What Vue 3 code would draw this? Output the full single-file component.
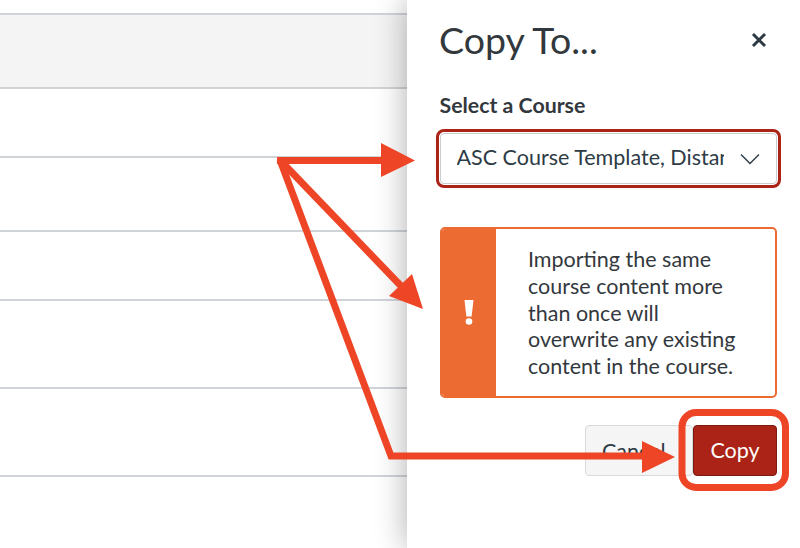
<script setup>
const rows = [
  { h: 15, cls: 'row blank' },
  { h: 74, cls: 'row shade' },
  { h: 69, cls: 'row' },
  { h: 74, cls: 'row' },
  { h: 69, cls: 'row' },
  { h: 88, cls: 'row' },
  { h: 88, cls: 'row' }
]
</script>

<template>
  <div class="page">
    <div class="table">
      <div v-for="(r, i) in rows" :key="i" :class="r.cls" :style="{ height: r.h + 'px' }"></div>
    </div>
    <aside class="panel">
      <header class="head">
        <h1 class="title">Copy To...</h1>
        <svg class="close" width="16" height="16" viewBox="0 0 16 16" aria-label="Close">
          <path d="M2 2 14 14M14 2 2 14" stroke="#2d3b45" stroke-width="3" fill="none" />
        </svg>
      </header>
      <div class="label">Select a Course</div>
      <div class="select-ring">
        <div class="select">
          <span class="select-text">ASC Course Template, Distance Learning</span>
          <svg class="chev" width="20" height="12" viewBox="0 0 20 12">
            <path d="M1 1.5 10 10.5 19 1.5" stroke="#2d3b45" stroke-width="1.4" fill="none" />
          </svg>
        </div>
      </div>
      <div class="alert">
        <div class="alert-icon">
          <svg width="10" height="25" viewBox="0 0 10 25">
            <path d="M0.5 0h9L7.6 16.5H2.4Z" fill="#fff" />
            <circle cx="5" cy="21.5" r="3.3" fill="#fff" />
          </svg>
        </div>
        <p class="alert-text">Importing the same course content more than once will overwrite any existing content in the course.</p>
      </div>
      <div class="actions">
        <button class="btn cancel">Cancel</button>
        <button class="btn copy">Copy</button>
      </div>
    </aside>
    <svg class="arrows" width="800" height="548" viewBox="0 0 800 548">
      <rect x="682" y="412.5" width="103.5" height="75" rx="14" fill="none" stroke="#ee4527" stroke-width="7" />
      <g stroke="#ee4527" stroke-width="7" fill="none" stroke-linejoin="miter">
        <path d="M277 160.5H385" />
        <path d="M280 160 402 287" />
        <path d="M280 160 391 456H648" />
      </g>
      <g fill="#ee4527">
        <path d="M381 143 415 160.5 381 177Z" />
        <path d="M423 309 389 296 412 274Z" />
        <path d="M642 441 675 457 642 473Z" />
      </g>
    </svg>
  </div>
</template>

<style scoped>
.page {
  position: relative;
  display: flex;
  width: 800px;
  height: 548px;
  overflow: hidden;
  background: #fff;
  font-family: Lato, "Open Sans", sans-serif;
  color: #33383d;
}
.table {
  width: 407px;
  flex: none;
}
.row {
  box-sizing: border-box;
  border-bottom: 2px solid #d0d4d8;
}
.shade {
  background: #f4f4f4;
}
.panel {
  position: relative;
  z-index: 1;
  box-sizing: border-box;
  width: 393px;
  padding: 0 23px 0 32.5px;
  background: #fff;
  box-shadow: 0 0 30px rgba(0, 0, 0, 0.32);
}
.head {
  display: flex;
  align-items: flex-start;
  justify-content: space-between;
  height: 84px;
}
.title {
  margin: 0 0 0 -0.5px;
  font-size: 37.5px;
  font-weight: 400;
  line-height: 84px;
  height: 84px;
  transform: translateY(-2px);
}
.close {
  margin: 32px 10px 0 0;
}
.label {
  margin-top: 6px;
  font-size: 21.3px;
  font-weight: 700;
  line-height: 30px;
}
.select-ring {
  margin: 9px 0 0 -4px;
  width: 345.5px;
  height: 59px;
  box-sizing: border-box;
  border: 3px solid #ab2316;
  border-radius: 8px;
  padding: 1px;
  background: #fff;
}
.select {
  display: flex;
  align-items: center;
  height: 100%;
  box-sizing: border-box;
  border: 1px solid #c7cdd1;
  border-radius: 4px;
  padding: 0 16px;
}
.select-text {
  width: 268px;
  padding-bottom: 3px;
  overflow: hidden;
  white-space: nowrap;
  font-size: 21.5px;
  color: #2d3b45;
}
.chev {
  margin-left: 16px;
}
.alert {
  display: flex;
  margin-top: 39px;
  width: 337.5px;
  height: 171px;
  box-sizing: border-box;
  border: 2px solid #ec6b32;
  border-radius: 5px;
  overflow: hidden;
}
.alert-icon {
  display: flex;
  flex: none;
  align-items: center;
  justify-content: center;
  width: 54.5px;
  background: #ec6b32;
}
.alert-text {
  margin: 0;
  padding: 17px 32px 0 32px;
  font-size: 21.5px;
  line-height: 26.8px;
}
.actions {
  display: flex;
  justify-content: flex-end;
  margin-top: 27px;
  width: 337.5px;
}
.btn {
  box-sizing: border-box;
  height: 51px;
  border-radius: 4px;
  font-family: inherit;
  font-size: 21.5px;
}
.cancel {
  width: 108px;
  background: #f5f5f5;
  border: 1px solid #d7dadd;
  color: #2d3b45;
  text-align: left;
  padding-left: 16px;
}
.copy {
  width: 84px;
  padding: 0 0 2px;
  background: #ab2316;
  border: 1px solid #7d1a10;
  color: #fff;
}
.arrows {
  position: absolute;
  top: 0;
  left: 0;
  z-index: 2;
  pointer-events: none;
}
</style>
